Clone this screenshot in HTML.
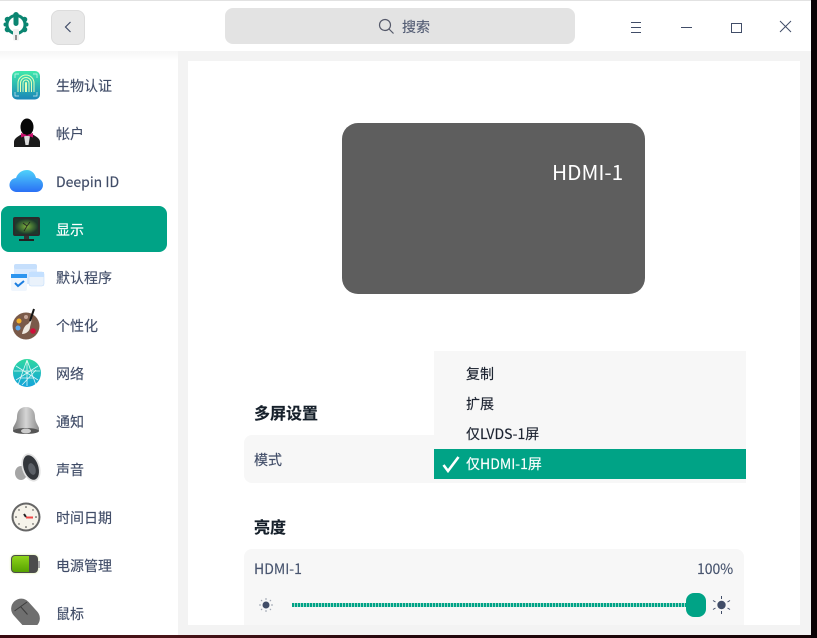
<!DOCTYPE html>
<html lang="zh"><head><meta charset="utf-8">
<style>
html,body{margin:0;padding:0;width:817px;height:638px;overflow:hidden;background:#120306;}
body{position:relative;font-family:"Noto Sans CJK SC","Liberation Sans",sans-serif;font-size:14px;color:#414d68;}
div,svg,span{position:absolute;}
svg{overflow:visible;}
.t{white-space:nowrap;line-height:20px;height:20px;-webkit-text-stroke:.15px currentColor;}
.nav{left:56px;}
</style></head><body>
<div style="left:0;top:635px;width:817px;height:3px;background:linear-gradient(90deg,#3a0a10,#4a1418 20%,#24070c 50%,#160406)"></div>
<div style="left:811px;top:0;width:6px;height:638px;background:#0a0205"></div>
<div id="win" style="left:0;top:0;width:811px;height:635px;background:#f3f3f3;overflow:hidden">
<div style="left:0;top:0;width:811px;height:1px;background:#e2e2e2"></div>
<div style="left:0;top:1px;width:811px;height:50px;background:#fff"></div>
<div style="left:0;top:51px;width:178px;height:584px;background:linear-gradient(#f6f6f6,#fff 10px)"></div>
<div style="left:188px;top:61px;width:612px;height:564px;background:#fff"></div>

<svg style="left:3px;top:12px" width="26" height="29" viewBox="0 0 26 29">
<g fill="#0b8571"><circle cx="13" cy="12.500" r="10.500"/><circle cx="13" cy="2.800" r="2.800"/><circle cx="21.500" cy="7.500" r="2.800"/><circle cx="21.500" cy="17.500" r="2.800"/><circle cx="4.500" cy="7.500" r="2.800"/><circle cx="4.500" cy="17.500" r="2.800"/><circle cx="13" cy="22.500" r="2.800"/><circle cx="23.500" cy="12.500" r="2"/><circle cx="2.500" cy="12.500" r="2"/></g>
<circle cx="13" cy="12.500" r="7.500" fill="#fff"/>
<path d="M10.500 3.500h5v8a2.500 2.500 0 0 1-5 0z" fill="#0b8571"/>
<rect x="10" y="17" width="6" height="11.500" rx="1.500" fill="#f0f0f0"/><rect x="12" y="23" width="2" height="5" fill="#8f8f8f"/></svg>

<div style="left:51px;top:10px;width:32px;height:33px;border:1px solid #dcdcdc;border-radius:8px;background:#e8e8e8"></div>
<svg style="left:62px;top:20px" width="12" height="14" viewBox="0 0 12 14"><path d="M8.500 2 3.500 7l5 5" fill="none" stroke="#414d68" stroke-width="1.200"/></svg>

<div style="left:225px;top:8px;width:350px;height:36px;border-radius:8px;background:#e3e3e3"></div>
<svg style="left:377px;top:17px" width="18" height="18" viewBox="0 0 18 18"><circle cx="8" cy="8" r="5.500" fill="none" stroke="#55596a" stroke-width="1.200"/><path d="M12 12l4.500 4.500" stroke="#55596a" stroke-width="1.200"/></svg>
<div class="t" style="left:402px;top:17px;font-size:14px;color:#555e75">搜索</div>

<svg style="left:630px;top:20px" width="12" height="14"><path d="M1 2.500h10M1 7.500h10M1 12.500h10" stroke="#414d68" stroke-width="1"/></svg>
<div style="left:681px;top:27px;width:11px;height:1px;background:#414d68"></div>
<div style="left:731px;top:23px;width:9px;height:8px;border:1px solid #414d68"></div>
<svg style="left:779px;top:20px" width="13" height="13"><path d="M1 1l11 11M12 1 1 12" stroke="#414d68" stroke-width="1"/></svg>

<!-- nav -->
<svg style="left:12px;top:71px" width="28" height="30" viewBox="0 0 28 30"><defs><linearGradient id="g1" x1="0" y1="0" x2="0" y2="1"><stop offset="0" stop-color="#3fe8ab"/><stop offset="1" stop-color="#1b86b8"/></linearGradient></defs><rect width="28" height="28.500" rx="5" fill="url(#g1)"/><g fill="none" stroke="#e4ffb8" stroke-width="1"><path d="M6 21v-9a8 8 0 0 1 16 0v9"/><path d="M8.500 21v-9a5.500 5.500 0 0 1 11 0v9"/><path d="M11 21v-9a3 3 0 0 1 6 0v9"/><path d="M13.500 21v-9a.5.5 0 0 1 1 0v9"/></g><path d="M3 7V3h4M21 3h4v4M3 21v4h4M25 21v4h-4" fill="none" stroke="#fff" stroke-width=".7" opacity=".8"/></svg>
<div class="t nav" style="top:76px">生物认证</div>

<svg style="left:13px;top:118px" width="28" height="30" viewBox="0 0 28 30"><path d="M1 29v-5c0-4 5-6 8-8h10c3 2 8 4 8 8v5z" fill="#1b1b1b"/><ellipse cx="14" cy="9" rx="6.500" ry="8.500" fill="#070707"/><path d="M11 18h6l-1.500 9h-3z" fill="#ddd"/><path d="M8 15l6 2 6-2v4.500l-6-2-6 2z" fill="#c9106e"/></svg>
<div class="t nav" style="top:124px">帐户</div>

<svg style="left:9px;top:169px" width="35" height="26" viewBox="0 0 35 26"><defs><linearGradient id="g2" x1="0" y1="0" x2="0" y2="1"><stop offset="0" stop-color="#4fd2fa"/><stop offset="1" stop-color="#2a70f5"/></linearGradient></defs><path d="M8 23a7 7 0 0 1-1-14C9 3 14 1 18 1c4 0 8 3 9 8a7 7 0 0 1 0 14z" fill="url(#g2)"/></svg>
<div class="t nav" style="top:172px">Deepin ID</div>

<div style="left:1px;top:206px;width:166px;height:46px;border-radius:8px;background:#00a386"></div>
<svg style="left:13px;top:217px" width="27" height="26" viewBox="0 0 27 26"><defs><radialGradient id="g5"><stop offset="0" stop-color="#7fae3c"/><stop offset=".6" stop-color="#3d6a33"/><stop offset="1" stop-color="#1d3a2c"/></radialGradient></defs><rect width="27" height="19" rx="2" fill="#2b2b2b"/><rect x="2" y="2" width="23" height="15" fill="url(#g5)"/><path d="M11 14l3-5 3-4M14 9l-4-3" stroke="#222" fill="none" stroke-width=".8"/><rect x="11" y="19" width="5" height="3" fill="#333"/><rect x="6" y="22" width="15" height="2" fill="#222"/></svg>
<div class="t nav" style="top:220px;color:#fff">显示</div>

<svg style="left:9px;top:263px" width="36" height="30" viewBox="0 0 36 30"><rect x="5" y="1" width="23" height="20" rx="3" fill="#d8e9fe"/><rect x="5" y="1" width="23" height="5" rx="2" fill="#c6dffc"/><rect x="20" y="9" width="15" height="14" rx="2" fill="#eaf2fb" stroke="#bcd8fa" stroke-width=".5"/><rect x="20" y="9" width="15" height="5" fill="#c4e0ff"/><rect x="2" y="11" width="16" height="17" rx="2" fill="#f0f6fd"/><rect x="2" y="11" width="16" height="4" fill="#2d95ef"/><path d="M6 20l3 3 6-5" fill="none" stroke="#1c7ee0" stroke-width="2"/></svg>
<div class="t nav" style="top:268px">默认程序</div>

<svg style="left:12px;top:309px" width="30" height="32" viewBox="0 0 30 32"><circle cx="14" cy="17" r="13.500" fill="#7a5a49"/><circle cx="7" cy="12" r="2.500" fill="#f2b02c"/><circle cx="14" cy="8" r="2" fill="#c5a598"/><circle cx="6" cy="19" r="2.500" fill="#5aa7ee"/><circle cx="21" cy="22" r="2.800" fill="#d0103a"/><path d="M20 10 16 15c-3 1-5 5-6 10 4 0 8-3 8-7z" fill="#eee8df"/><path d="M22 0l-4 12" stroke="#151515" stroke-width="2"/></svg>
<div class="t nav" style="top:316px">个性化</div>

<svg style="left:12px;top:358px" width="30" height="30" viewBox="0 0 30 30"><defs><linearGradient id="g3" x1="0" y1="0" x2="0" y2="1"><stop offset="0" stop-color="#2fd8a0"/><stop offset="1" stop-color="#13a3dc"/></linearGradient></defs><circle cx="15" cy="15" r="14" fill="url(#g3)"/><path d="M15 2 6 27M15 2l9 25M2 13h26M4 22l22-14M26 22 4 8M8 20h14M15 2v26M10 27l14-15" stroke="#fff" stroke-width=".8" opacity=".85" fill="none"/></svg>
<div class="t nav" style="top:364px">网络</div>

<svg style="left:12px;top:406px" width="28" height="30" viewBox="0 0 28 30"><defs><linearGradient id="g4" x1="0" y1="0" x2="1" y2="0"><stop offset="0" stop-color="#808080"/><stop offset=".5" stop-color="#d5d5d5"/><stop offset="1" stop-color="#8c8c8c"/></linearGradient></defs><path d="M14 1c6 0 9 4 9 10 0 5 3 8 4 11v3H1v-3c1-3 4-6 4-11 0-6 3-10 9-10z" fill="url(#g4)"/><ellipse cx="14" cy="25" rx="13" ry="3" fill="#555"/><ellipse cx="14" cy="25" rx="5" ry="2.500" fill="#ccc"/></svg>
<div class="t nav" style="top:412px">通知</div>

<svg style="left:14px;top:452px" width="28" height="32" viewBox="0 0 28 32"><ellipse cx="7" cy="21" rx="6" ry="7" fill="#a5a5a5"/><ellipse cx="17" cy="15.500" rx="9" ry="14.500" transform="rotate(-18 17 15.500)" fill="#e2e2e2"/><ellipse cx="17" cy="15.500" rx="7.300" ry="12.700" transform="rotate(-18 17 15.500)" fill="#33363b"/><ellipse cx="18" cy="17" rx="3.500" ry="6" transform="rotate(-18 18 17)" fill="#5c6067"/></svg>
<div class="t nav" style="top:460px">声音</div>

<svg style="left:11px;top:502px" width="31" height="31" viewBox="0 0 31 31"><circle cx="15" cy="15" r="14.500" fill="#666"/><circle cx="15" cy="15" r="12.500" fill="#f6f3ea"/><g fill="#333"><circle cx="15" cy="5" r=".8"/><circle cx="15" cy="25" r=".8"/><circle cx="5" cy="15" r=".8"/><circle cx="25" cy="15" r=".8"/><circle cx="8" cy="8" r=".7"/><circle cx="22" cy="8" r=".7"/><circle cx="8" cy="22" r=".7"/><circle cx="22" cy="22" r=".7"/></g><path d="M13 12l2 3" stroke="#222" stroke-width="2"/><path d="M15 15.500h7" stroke="#f04848" stroke-width="2"/></svg>
<div class="t nav" style="top:508px">时间日期</div>

<div style="left:11px;top:555px;width:27px;height:18px;border-radius:4px;background:#4c4c4c;box-shadow:0 0 2px #cfe88a"></div>
<div style="left:12px;top:556px;width:17px;height:16px;border-radius:3px 0 0 3px;background:linear-gradient(#8ed41a,#56a200)"></div>
<div style="left:38px;top:561px;width:2px;height:7px;background:#aaa"></div>
<div class="t nav" style="top:556px">电源管理</div>

<div style="left:0;top:596px;width:45px;height:29px;overflow:hidden">
<svg style="left:0;top:0" width="45" height="40" viewBox="0 0 45 40"><rect x="15.500" y="1" width="20" height="33" rx="10" transform="rotate(-42 25.500 17.500)" fill="#6f6f6f"/><path d="M14.500 15 27 6M20.500 10.500l7 8" stroke="#3d3d3d" stroke-width="1" fill="none"/></svg>
</div>
<div class="t nav" style="top:604px">鼠标</div>

<!-- monitor -->
<div style="left:342px;top:123px;width:303px;height:170.500px;border-radius:16px;background:#5e5e5e"></div>
<div class="t" style="left:552px;top:160px;font-size:20.800px;line-height:22px;height:22px;color:#fff;-webkit-text-stroke:0">HDMI-1</div>

<!-- settings -->
<div class="t" style="left:254px;top:402px;font-size:16px;font-weight:700;color:#16202b">多屏设置</div>
<div style="left:244px;top:435px;width:500px;height:48px;border-radius:8px;background:#f7f7f7"></div>
<div class="t" style="left:254px;top:450px">模式</div>

<div style="left:434px;top:351px;width:312px;height:132px;background:#f7f7f7"></div>
<div class="t" style="left:466px;top:364px;color:#1c2330">复制</div>
<div class="t" style="left:466px;top:394px;color:#1c2330">扩展</div>
<div class="t" style="left:466px;top:424px;color:#1c2330">仅LVDS-1屏</div>
<div style="left:434px;top:449px;width:312px;height:30px;background:#00a386"></div>
<svg style="left:442px;top:455px" width="18" height="18" viewBox="0 0 18 18"><path d="M1.500 10l4.500 6L16.500 2" fill="none" stroke="#fff" stroke-width="2.600"/></svg>
<div class="t" style="left:466px;top:454px;color:#fff">仅HDMI-1屏</div>

<div class="t" style="left:254px;top:516px;font-size:16px;font-weight:700;color:#16202b">亮度</div>
<div style="left:244px;top:549px;width:500px;height:76px;border-radius:8px 8px 0 0;background:#f7f7f7"></div>
<div class="t" style="left:254px;top:559px;color:#48556f">HDMI-1</div>
<div class="t" style="left:697px;top:559px;color:#48556f">100%</div>

<svg style="left:258px;top:597px" width="16" height="16" viewBox="0 0 16 16"><circle cx="8" cy="8" r="3.500" fill="#414d68"/><path d="M8 1v2M8 13v2M1 8h2M13 8h2M3 3l1.200 1.200M13 3l-1.200 1.200M3 13l1.200-1.200M13 13l-1.200-1.200" stroke="#9aa0ad" stroke-width="1"/></svg>
<div style="left:292px;top:603px;width:400px;height:4px;background:repeating-linear-gradient(90deg,#00a386 0 2px,#9fd8cc 2px 3px)"></div>
<div style="left:686px;top:593px;width:20px;height:24px;border-radius:8px;background:#00a386"></div>
<svg style="left:712px;top:595px" width="19" height="20" viewBox="0 0 19 20"><circle cx="9.500" cy="10" r="4.200" fill="#414d68"/><path d="M9.500 1v3M9.500 16v3M1 5.500l2.500 1.500M18 5.500 15.500 7M1 14.500 3.500 13M18 14.500 15.500 13" stroke="#414d68" stroke-width="1"/></svg>
</div>
</body></html>
